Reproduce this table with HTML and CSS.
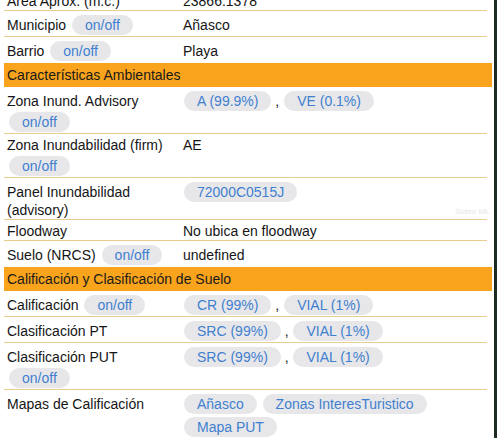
FILE: index.html
```html
<!DOCTYPE html>
<html lang="es">
<head>
<meta charset="utf-8">
<link rel="stylesheet" href="styles.css">
</head>
<body>
<div class="page">
  <div class="tbl">
    <div class="row"><div class="lbl">Área Aprox. (m.c.)</div><div class="val">23866.1378</div></div>
    <div class="row"><div class="lbl">Municipio <span class="pill">on/off</span></div><div class="val">Añasco</div></div>
    <div class="row last"><div class="lbl">Barrio <span class="pill">on/off</span></div><div class="val">Playa</div></div>
    <div class="head">Características Ambientales</div>
    <div class="row"><div class="lbl">Zona Inund. Advisory <span class="pill">on/off</span></div><div class="val"><span class="pill">A (99.9%)</span> , <span class="pill">VE (0.1%)</span></div></div>
    <div class="row"><div class="lbl">Zona Inundabilidad (firm) <span class="pill">on/off</span></div><div class="val">AE</div></div>
    <div class="row"><div class="lbl">Panel Inundabilidad (advisory)</div><div class="val"><span class="pill">72000C0515J</span></div></div>
    <div class="row"><div class="lbl">Floodway</div><div class="val">No ubica en floodway</div></div>
    <div class="row last"><div class="lbl">Suelo (NRCS) <span class="pill">on/off</span></div><div class="val">undefined</div></div>
    <div class="head">Calificación y Clasificación de Suelo</div>
    <div class="row"><div class="lbl">Calificación <span class="pill">on/off</span></div><div class="val"><span class="pill">CR (99%)</span> , <span class="pill">VIAL (1%)</span></div></div>
    <div class="row"><div class="lbl">Clasificación PT</div><div class="val"><span class="pill">SRC (99%)</span> , <span class="pill">VIAL (1%)</span></div></div>
    <div class="row"><div class="lbl">Clasificación PUT <span class="pill">on/off</span></div><div class="val"><span class="pill">SRC (99%)</span> , <span class="pill">VIAL (1%)</span></div></div>
    <div class="row last"><div class="lbl">Mapas de Calificación</div><div class="val"><span class="pill map">Añasco</span> <span class="pill map">Zonas InteresTuristico</span> <span class="pill map">Mapa PUT</span></div></div>
  </div>
  <span class="ghost">Sobre ML</span>
</div>
</body>
</html>
```

FILE: styles.css
```css
html, body {
  margin: 0;
  padding: 0;
  background: #ffffff;
}

body {
  font-family: "Liberation Sans", Arial, Helvetica, sans-serif;
  font-size: 14px;
  line-height: 18px;
  color: #151515;
}

.page {
  position: relative;
  width: 497px;
  height: 438px;
  overflow: hidden;
  box-sizing: border-box;
  border-right: 3px solid #1c2a20;
}

.tbl {
  margin: -10px 0 0 4px;
  width: 488px;
}

.row {
  display: grid;
  grid-template-columns: 177px 1fr;
  align-items: baseline;
  margin-right: 5px;
  padding-top: 2px;
  border-bottom: 1px solid #e8cd8f;
}

.row.last {
  border-bottom-color: #ffffff;
}

.lbl {
  padding: 0 3px;
}

.lbl .pill {
  margin-left: 2px;
}

.val {
  padding: 0 3px 0 2px;
}

.head {
  background: #f9a41c;
  padding: 3px 3px 3px;
  color: #1a1a1a;
}

.pill {
  display: inline-block;
  vertical-align: baseline;
  height: 20px;
  line-height: 20px;
  margin: 2px 0 1px 1px;
  padding: 0 13px;
  border-radius: 10px;
  background: #e7e7ea;
  color: #3f7fcf;
}

.pill.map {
  margin-right: 1px;
}

.ghost {
  position: absolute;
  left: 455px;
  top: 207px;
  font-size: 8px;
  line-height: 10px;
  white-space: nowrap;
  color: #e6e6e6;
}
```
